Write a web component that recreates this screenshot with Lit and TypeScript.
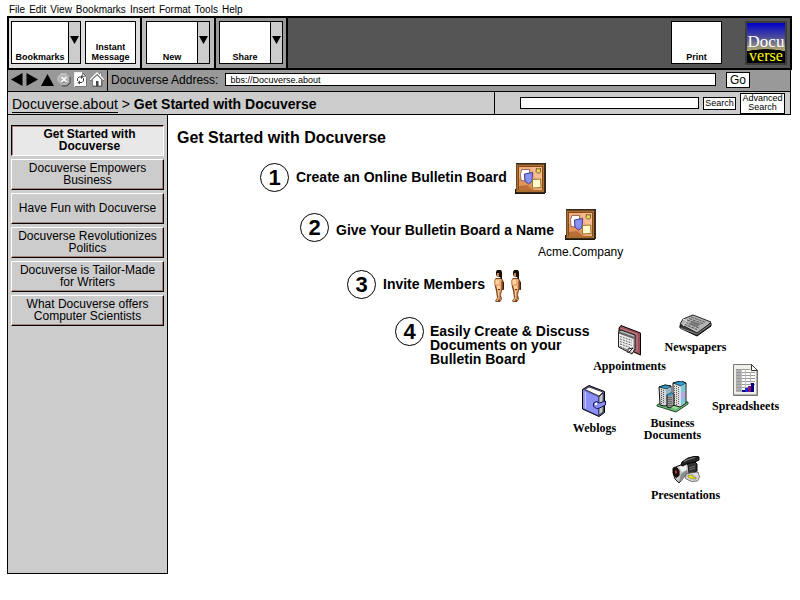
import { LitElement, html, css, svg } from "lit";
import { customElement, state } from "lit/decorators.js";
import { classMap } from "lit/directives/class-map.js";
import { styleMap } from "lit/directives/style-map.js";

const icon = (w: number, h: number, body: unknown) => html`<svg
  class="icon"
  width=${w}
  height=${h}
  viewBox="0 0 ${w} ${h}"
  aria-hidden="true"
>${body}</svg>`;

const backIcon = icon(12, 13, svg`<path d="M0 6.500 11.500 0v13z" fill="#000"/>`);
const forwardIcon = icon(12, 13, svg`<path d="M12 6.500 .5 0v13z" fill="#000"/>`);
const upIcon = icon(13, 12, svg`<path d="M6.500 0 13 12H0z" fill="#000"/>`);
const dropIcon = icon(9, 8, svg`<path d="M0 0h9L4.500 8z" fill="#000"/>`);
const stopIcon = icon(14, 14, svg`
  <path d="M4 1h6l3 3v6l-3 3H4l-3-3V4z" fill="#8a8a8a"/>
  <path d="M4 0h5l4 4v5l-4 3H4L1 9V4z" fill="#b5b5b5"/>
  <path d="M1 8V4l3-3h5" fill="none" stroke="#ccc"/>
  <path d="M13 4v6l-3 3H5" fill="none" stroke="#444"/>
  <path d="M4.500 4 9.500 9M9.500 4 4.500 9" stroke="#fff" stroke-width="1.500"/>
  <path d="M5 10.500 7 8.500 9 10.500" fill="none" stroke="#666" stroke-width=".8"/>`);
const refreshIcon = icon(13, 15, svg`
  <path d="M.5.500h8.500L12.500 4v10.500H.5z" fill="#fff" stroke="#eee"/>
  <path d="M8.500 0 13 4.500H8.500z" fill="#222"/>
  <path d="M9 1.500 11.500 4H9z" fill="#ddd"/>
  <path d="M12.500 5v9.500H1" fill="none" stroke="#777"/>
  <path d="M3.500 9V6.500L5 5h2.500M9.500 6v3L8 10.500H5.500" fill="none" stroke="#444"/>
  <path d="M7 3 9.500 5 7 7zM6 8.500 3.500 10.500 6 12.500z" fill="#444"/>`);
const homeIcon = icon(14, 15, svg`
  <path d="M9.500 1h2v5h-2z" fill="#fff" stroke="#555" stroke-width=".6"/>
  <path d="M2.500 7.500 7 3l4.500 4.500v6.500h-9z" fill="#fff" stroke="#666" stroke-width=".8"/>
  <path d="M.5 8 7 1.500 13.500 8" fill="none" stroke="#fff" stroke-width="2"/>
  <path d="M.5 9 7 2.500 13.500 9" fill="none" stroke="#333" stroke-width=".9"/>
  <path d="M6 9h2.500v5H6z" fill="#444"/>
  <path d="M12 9v5.500H3" fill="none" stroke="#555" stroke-width=".8"/>`);

const boardIcon = icon(31, 31, svg`
  <path d="M1 0h30v30H1zM0 26h2v5H0z" fill="#3a2a1c"/>
  <path d="M0 26h2v4h28v1H0z" fill="#22180c"/>
  <path d="M1 1h28v28H1z" fill="#a8702c"/>
  <path d="M1 1h28v1H1zM1 1h1v27H1z" fill="#6a4a2c"/>
  <path d="M3 3h25v24H3z" fill="#8a4a1c"/>
  <path d="M4 4h23v23H4z" fill="#f4ac80"/>
  <path d="M4 15h10l5 12H4z" fill="#e2945c"/>
  <path d="M4 23l8-1 6 5H4z" fill="#b87038"/>
  <path d="M17 4h10v12h-6z" fill="#f8bc94"/>
  <path d="M7 6.500h7.500v4L10 12v6l-4-.5-.5-7z" fill="#fff" stroke="#907068"/>
  <path d="M9.500 11l8-1.500-.5 9-3.500 2.500-3.500-3z" fill="#8a90f4" stroke="#3c3c98"/>
  <path d="M21.500 5l1 1h2l1-1v4l-1 1h-2l-1.500-1.500z" fill="#e8dc58" stroke="#786020"/>
  <path d="M17.500 16.500l8-.5.5 8.500-8.500.5z" fill="#fffcd0" stroke="#9a7828"/>`);

const personIcon = icon(12, 32, svg`
  <path d="M3 8h5l2 2 1 3v7H9l-1 5 1 4-2 3H3l-1-1 2-3-1-7-1-4-1-5 1-3z" fill="#7c4420"/>
  <path d="M3 9h5l1 2v8H8l-1 8 1 3H7l-1-2-1 3H3l2-4-1-8-1-3-2-3 1-3z" fill="#eaae78"/>
  <path d="M3 10h3v4H3zM4 16h3v3H4zM5 21h1v5H5z" fill="#ffd2a0"/>
  <path d="M8.500 11v8M7 22v6" stroke="#a8683c"/>
  <path d="M4 0h4l1 2v7L8 9 7 7H4L3 4V2z" fill="#180c08"/>
  <path d="M4 3h2v4H4z" fill="#c98250"/>
  <path d="M10 12h1v7h-1z" fill="#3c1c0c"/>
  <path d="M5 19h2v1H5z" fill="#5a2c14"/>`);

const appointmentsIcon = icon(23, 31, svg`
  <path d="M1 3 3 .500 22.500 8v22L18 28 1 20z" fill="#98505a" stroke="#000"/>
  <path d="M3 3.500 19 9v18" fill="none" stroke="#c88088"/>
  <path d="M.5 7 3 5l14 5v14l-3 5L.5 22z" fill="#b8b8b8" stroke="#222"/>
  <path d="M1 8l14 5v14L1 21z" fill="#ececec"/>
  <path d="M1 7.500 16 13" stroke="#666" stroke-width="2"/>
  <path d="M2 11.500l12 4M2 14l12 4M2 16.500l12 4M2 19l10 3.500M2 21.500l7 3" stroke="#666" stroke-dasharray="2 1"/>
  <path d="M10 28v-4l5-1z" fill="#fff" stroke="#222"/>`);
const newspapersIcon = icon(33, 23, svg`
  <path d="M1 11v3l17 8 14-10V9z" fill="#3c3c3c" stroke="#000"/>
  <path d="M1 14l17 6 14-10" fill="none" stroke="#888"/>
  <path d="M1 10l3-5L14 1l18 7-3 3-11 8z" fill="#b4b4b4" stroke="#222"/>
  <path d="M12 3l15 5.500M10 4.500l15 5.500M8 6l7 2.500M6 8l14 6M5 10l13 5.500" stroke="#555" stroke-dasharray="3 1"/>
  <path d="M14 7l8 3-4 3-8-3z" fill="#787878"/>
  <path d="M4 5l4 2-4 5" fill="none" stroke="#eee"/>`);
const weblogsIcon = icon(25, 33, svg`
  <path d="M.5 4.500 7 .500l15.500 6v21L17 31.500.5 24z" fill="#5558b0" stroke="#000"/>
  <path d="M3 4.500 7 2l14 5-4 4z" fill="#fff" stroke="#444"/>
  <path d="M17 12l4-4v19l-4 3z" fill="#f4f4f4" stroke="#333"/>
  <path d="M19 11v17" stroke="#999"/>
  <path d="M1 5l15 7v18L1 23z" fill="#8c90f4"/>
  <path d="M3.500 6.500v17" stroke="#c8caff"/>
  <path d="M16.500 12v18" stroke="#383c98"/>
  <path d="M11.500 18l3-1.500 3 1.500 6-2v4l-6 3-3 .5-3-2z" fill="#8c90f4" stroke="#161650"/>
  <path d="M13 18h2v2h-2z" fill="#fff"/>`);
const buildingsIcon = icon(33, 32, svg`
  <path d="M1 24l9-5 22 2v2L20 31 1 25z" fill="#6eb878" stroke="#184a20"/>
  <path d="M3 24l8-3 17 2-8 5z" fill="#98dca0"/>
  <path d="M3 6l6-2 6 1v18l-6 2-5-1z" fill="#d4d4d4" stroke="#111"/>
  <path d="M3 6l6-2 6 1-4 3z" fill="#28a0cc" stroke="#111" stroke-width=".7"/>
  <path d="M5.500 8v15M7.500 9v14" stroke="#555" stroke-dasharray="1 1"/>
  <path d="M10 9l5-2v15l-5 2z" fill="#8ab8cc"/>
  <path d="M17 2l8-2 5 2v20l-6 4-7-2z" fill="#dedede" stroke="#111"/>
  <path d="M17 2l8-2 5 2-5 3z" fill="#2a9ed0" stroke="#111" stroke-width=".7"/>
  <path d="M25 5l4-2v18l-4 4z" fill="#74c8e0"/>
  <path d="M25 12l4-2v6l-4 3z" fill="#b9a8e8"/>
  <path d="M18.500 5v18M20.500 5v19M22.500 6v18" stroke="#666" stroke-dasharray="1 1"/>
  <path d="M11 14l4-2 3 1v11l-4 3-3-1z" fill="#9a9a9a" stroke="#111"/>
  <path d="M11 14l4-2 3 1-4 2z" fill="#28a0cc"/>
  <path d="M13 16v9M15 16v9" stroke="#333" stroke-dasharray="1 1"/>`);
const spreadsheetsIcon = icon(25, 32, svg`
  <path d="M.5.500h18l6 6v25H.5z" fill="#f0f0e8" stroke="#777"/>
  <path d="M18.500.500v6h6z" fill="#fff" stroke="#333"/>
  <path d="M3 5h14v3h5v20H3z" fill="#fff"/>
  <path d="M3 5h5v23H3z" fill="#b0b0b0"/>
  <path d="M3 5.500h14M3 8.500h19M3 11.500h19M3 14.500h19M3 17.500h19M3 20.500h19M3 23.500h12M3 26.500h8" stroke="#999"/>
  <path d="M8.500 5v23M12.500 5v20M17.500 8v12" stroke="#bbb"/>
  <path d="M9 26h3v2H9zM18 19h3v9h-3z" fill="#000080"/>
  <path d="M12 24h3v4h-3z" fill="#1828d8"/>
  <path d="M15 22h3v6h-3z" fill="#8a1070"/>
  <path d="M24 7v24H1" fill="none" stroke="#777"/>`);
const presentationsIcon = icon(28, 29, svg`
  <path d="M14 7l8-2 3 3v7l-9 4-3-3z" fill="#333" stroke="#000"/>
  <path d="M1 12l5-2 8-3 2 2 1 8-5 4-5 6-4-4-2-6z" fill="#c4c4c4" stroke="#111"/>
  <path d="M7 11l6-2 2 2-1 3-4 2z" fill="#f0f0f0"/>
  <path d="M9 18l6-4 1 3-6 7-3 2z" fill="#8c8c8c"/>
  <path d="M1.500 13l3-1.500 2.500 3v5l-3 2-2.500-3z" fill="#1c1010" stroke="#000"/>
  <path d="M3 14.500h2v3H3z" fill="#b8341c"/>
  <path d="M17 12l6-2M17 14l6-2" stroke="#888" stroke-width=".7"/>
  <path d="M10 6l6-4 8-2 3 1v3l-4 2-9 2-3 2-2-1z" fill="#262626" stroke="#000"/>
  <path d="M12 5.500l4-2 7-2" fill="none" stroke="#8c8c8c"/>
  <path d="M14 18l4-1 8-1 1.500 5-2 4-6 .5-6-3z" fill="#dcdcdc" stroke="#555" stroke-width=".8"/>
  <path d="M16 19h5v2h3v2h-5l-3-2z" fill="#e8e020" stroke="#555" stroke-width=".5"/>`);

interface DocumentKind {
  label: string;
  left: number;
  top: number;
  art: unknown;
}

const DOCUMENT_KINDS: DocumentKind[] = [
  { label: "Appointments", left: 9, top: 8, art: appointmentsIcon },
  { label: "Newspapers", left: 75, top: -3, art: newspapersIcon },
  { label: "Spreadsheets", left: 125, top: 47, art: spreadsheetsIcon },
  { label: "Weblogs", left: -26, top: 68, art: weblogsIcon },
  { label: "Business Documents", left: 52, top: 64, art: buildingsIcon },
  { label: "Presentations", left: 65, top: 139, art: presentationsIcon },
];

const MENUS = ["File", "Edit", "View", "Bookmarks", "Insert", "Format", "Tools", "Help"];

const TOPICS = [
  "Get Started with Docuverse",
  "Docuverse Empowers Business",
  "Have Fun with Docuverse",
  "Docuverse Revolutionizes Politics",
  "Docuverse is Tailor-Made for Writers",
  "What Docuverse offers Computer Scientists",
];

@customElement("app-root")
export class AppRoot extends LitElement {
  @state() private topic = 0;

  static styles = css`
    :host {
      display: flex;
      flex-direction: column;
      box-sizing: border-box;
      min-height: 100vh;
      padding: 3px 8px 26px 7px;
      background: #fff;
      color: #000;
      font: 12px/12px "Liberation Sans", Arial, sans-serif;
    }
    * {
      box-sizing: border-box;
    }
    button,
    input {
      margin: 0;
      padding: 0;
      border: 1px solid #000;
      border-radius: 0;
      background: #fff;
      color: inherit;
      font: inherit;
    }
    .icon {
      display: block;
      flex: none;
    }
    .menus {
      display: flex;
      gap: 4px;
      padding-left: 2px;
      font-size: 10px;
      height: 13px;
    }
    .menus button {
      border: 0;
      background: none;
    }
    .toolbar {
      display: flex;
      border: 2px solid #000;
      background: #555;
    }
    .group {
      display: flex;
      gap: 4px;
      padding: 3px 3px 4px;
      border-right: 2px solid #000;
    }
    .light {
      padding: 3px 4px 4px 2px;
      background: #ddd;
    }
    .mid {
      padding: 3px 4px 4px;
      background: #bbb;
    }
    .dark {
      background: #999;
    }
    .tool {
      display: flex;
      align-items: flex-end;
      justify-content: center;
      height: 43px;
      width: 51px;
      padding-bottom: 1px;
      font-size: 9px;
      line-height: 10px;
      font-weight: bold;
    }
    .split {
      display: flex;
    }
    .split .tool {
      width: 52px;
    }
    .light .split .tool {
      width: 58px;
    }
    .drop {
      display: flex;
      justify-content: center;
      width: 13px;
      padding-top: 14px;
      margin-left: -1px;
      background: #ccc;
    }
    .right {
      display: flex;
      align-items: flex-start;
      gap: 23px;
      margin-left: auto;
      padding: 3px 3px 0 0;
    }
    .logo {
      width: 42px;
      height: 44px;
      border: 2px solid #3c3c3c;
      background:
        radial-gradient(ellipse 38px 14px at 50% 100%, #000 96%, transparent),
        linear-gradient(#0000c8, #4a4a9c 35%, #b8b06c 70%);
      font-family: "Liberation Serif", "Times New Roman", serif;
      display: flex;
      flex-direction: column;
      align-items: center;
      justify-content: flex-end;
    }
    .docu,
    .verse {
      color: #fff;
      font-size: 17px;
      line-height: 14px;
    }
    .verse {
      color: #ff0;
      font-size: 16px;
    }
    .bar {
      display: flex;
      margin-right: 1px;
      border: solid #000;
      border-width: 0 1px 1px;
    }
    .address {
      height: 22px;
      background: #999;
      align-items: center;
      padding-right: 40px;
    }
    .nav {
      display: flex;
      align-items: center;
      gap: 3px;
      align-self: stretch;
      padding: 0 3px 2px;
      border-right: 1px solid #000;
    }
    .nav button {
      border: 0;
      background: none;
    }
    .address label {
      padding: 0 7px 1px 3px;
    }
    .url {
      flex: 1;
      min-width: 0;
      height: 13px;
      margin-bottom: 2px;
      padding: 0 4px;
      font-size: 9px;
    }
    .go {
      width: 24px;
      height: 16px;
      margin: 0 0 1px 10px;
    }
    .path {
      height: 23px;
      background: #ccc;
      font-size: 14px;
      line-height: 16px;
    }
    .crumbs {
      flex: 1;
      padding: 4px 0 0 4px;
      white-space: nowrap;
    }
    .crumbs a {
      color: inherit;
      text-decoration: none;
      border-bottom: 1px solid #000;
    }
    .finder {
      display: flex;
      align-items: center;
      gap: 4px;
      padding: 0 5px 0 25px;
      border-left: 1px solid #000;
      font-size: 9px;
      line-height: 9px;
    }
    .finder input {
      width: 179px;
      height: 12px;
      padding: 0 3px;
    }
    .search {
      width: 33px;
      height: 13px;
    }
    .advanced {
      width: 45px;
      height: 21px;
    }
    .body {
      display: flex;
      flex: 1;
      margin-right: 1px;
    }
    .topics {
      flex: none;
      display: flex;
      flex-direction: column;
      gap: 3px;
      width: 161px;
      padding: 10px 3px;
      border: solid #000;
      border-width: 0 1px 1px;
      background: #ccc;
    }
    .topic {
      height: 31px;
      padding: 0 5px 1px;
      background: #ccc;
      border-color: #fff #000 #000 #fff;
      box-shadow: inset -1px -1px #a88478;
    }
    .topic.current {
      background: #e8e8e8;
      border-color: #000 #fff #fff #000;
      box-shadow: inset 1px 1px #a88478;
      font-weight: bold;
      padding: 0 24px 1px 28px;
    }
    .content {
      flex: 1;
      min-width: 0;
      padding: 14px 0 0 9px;
    }
    h1 {
      margin: 0;
      font-size: 16px;
      line-height: 18px;
    }
    .steps {
      margin: 0;
      padding: 16px 0 0;
      list-style: none;
    }
    .step {
      display: flex;
      font-size: 14px;
      line-height: 14px;
      font-weight: bold;
    }
    .create { margin-left: 83px; }
    .name { margin: 15px 0 0 123px; }
    .invite { margin: 12px 0 0 170px; }
    .discuss { margin: 15px 0 0 218px; }
    .number {
      flex: none;
      display: flex;
      align-items: center;
      justify-content: center;
      width: 29px;
      height: 29px;
      border: 1px solid #000;
      border-radius: 50%;
      font-size: 22px;
    }
    .name .number {
      margin-top: 4px;
    }
    .caption {
      margin: 7px 8px 0 7px;
      white-space: nowrap;
    }
    .name .caption {
      margin: 14px 11px 0 7px;
    }
    .discuss .caption {
      margin: 7px 0 0 6px;
    }
    .board {
      display: flex;
      flex-direction: column;
      align-items: center;
      gap: 6px;
      width: 31px;
      margin: 0;
    }
    .board figcaption {
      font-size: 12px;
      line-height: 12px;
      font-weight: normal;
      white-space: nowrap;
      width: max-content;
    }
    .people {
      display: flex;
      gap: 5px;
    }
    .canvas {
      position: relative;
      flex: none;
      height: 200px;
      width: 206px;
      margin-left: -9px;
    }
    .kind {
      position: absolute;
      display: flex;
      flex-direction: column;
      align-items: center;
      gap: 4px;
      width: 80px;
      color: inherit;
      text-decoration: none;
      text-align: center;
      font: bold 12px/12px "Liberation Serif", "Times New Roman", serif;
    }
  `;

  private tool(label: unknown) {
    return html`<button class="tool">${label}</button>`;
  }

  private splitTool(label: string) {
    return html`<div class="split">
      <button class="tool">${label}</button>
      <button class="drop" aria-label="${label} options">${dropIcon}</button>
    </div>`;
  }

  render() {
    return html`
      <nav class="menus">${MENUS.map((m) => html`<button>${m}</button>`)}</nav>
      <header class="toolbar">
        <div class="group light">
          ${this.splitTool("Bookmarks")} ${this.tool(html`Instant<br />Message`)}
        </div>
        <div class="group mid">${this.splitTool("New")}</div>
        <div class="group dark">${this.splitTool("Share")}</div>
        <div class="right">
          ${this.tool("Print")}
          <div class="logo"><span class="docu">Docu</span><span class="verse">verse</span></div>
        </div>
      </header>
      <div class="bar address">
        <div class="nav">
          <button aria-label="Back">${backIcon}</button>
          <button aria-label="Forward">${forwardIcon}</button>
          <button aria-label="Up">${upIcon}</button>
          <button aria-label="Stop">${stopIcon}</button>
          <button aria-label="Refresh">${refreshIcon}</button>
          <button aria-label="Home">${homeIcon}</button>
        </div>
        <label for="url">Docuverse Address:</label>
        <input id="url" class="url" type="text" .value=${"bbs://Docuverse.about"} />
        <button class="go">Go</button>
      </div>
      <div class="bar path">
        <div class="crumbs">
          <a href="#about">Docuverse.about</a> &gt; <b>Get Started with Docuverse</b>
        </div>
        <div class="finder">
          <input type="search" aria-label="Search" />
          <button class="search">Search</button>
          <button class="advanced">Advanced Search</button>
        </div>
      </div>
      <div class="body">
        <nav class="topics">
          ${TOPICS.map(
            (t, i) => html`<button
              class=${classMap({ topic: true, current: i === this.topic })}
              @click=${() => (this.topic = i)}
            >${t}</button>`
          )}
        </nav>
        <main class="content">
          <h1>Get Started with Docuverse</h1>
          <ol class="steps">
            <li class="step create">
              <span class="number">1</span>
              <span class="caption">Create an Online Bulletin Board</span>
              ${boardIcon}
            </li>
            <li class="step name">
              <span class="number">2</span>
              <span class="caption">Give Your Bulletin Board a Name</span>
              <figure class="board">
                ${boardIcon}
                <figcaption>Acme.Company</figcaption>
              </figure>
            </li>
            <li class="step invite">
              <span class="number">3</span>
              <span class="caption">Invite Members</span>
              <span class="people">${personIcon}${personIcon}</span>
            </li>
            <li class="step discuss">
              <span class="number">4</span>
              <span class="caption">Easily Create &amp; Discuss<br />Documents on your<br />Bulletin Board</span>
              <div class="canvas">
                ${DOCUMENT_KINDS.map(
                  (k) => html`<a
                    class="kind"
                    href="#${k.label}"
                    style=${styleMap({ left: `${k.left}px`, top: `${k.top}px` })}
                  >${k.art}<span>${k.label}</span></a>`
                )}
              </div>
            </li>
          </ol>
        </main>
      </div>
    `;
  }
}
